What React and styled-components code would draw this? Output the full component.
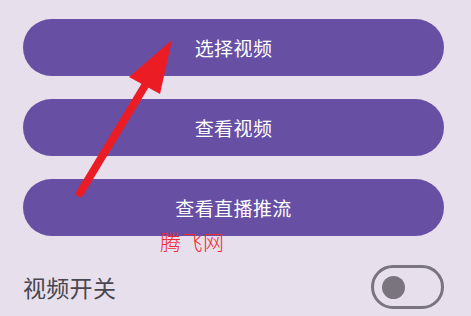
import React, { useState } from 'react'
import styled, { createGlobalStyle } from 'styled-components'

const Global = createGlobalStyle`
  html, body {
    margin: 0;
    padding: 0;
    background: #e7e0ec;
  }
  body {
    font-family: "Noto Sans CJK SC", "Noto Sans", sans-serif;
  }
`

const Page = styled.div`
  position: relative;
  width: 471px;
  height: 316px;
  overflow: hidden;
  background: #e7e0ec;
  box-sizing: border-box;
  padding: 19px 27px 0 23px;
  display: flex;
  flex-direction: column;
`

const Buttons = styled.div`
  display: flex;
  flex-direction: column;
  gap: 23px;
`

const Button = styled.button`
  height: 57px;
  width: 100%;
  border: none;
  border-radius: 29px;
  background: #6750a4;
  color: #ffffff;
  font-family: "Noto Sans CJK SC", "Noto Sans", sans-serif;
  font-size: 19px;
  letter-spacing: 0.4px;
  display: flex;
  align-items: center;
  justify-content: center;
  padding: 0;
  cursor: pointer;
`

const SwitchRow = styled.div`
  margin-top: 29px;
  height: 44px;
  display: flex;
  align-items: center;
  justify-content: space-between;
`

const Label = styled.span`
  font-size: 23px;
  color: #49454f;
  letter-spacing: 0.3px;
`

const Track = styled.div`
  width: 73px;
  height: 44px;
  box-sizing: border-box;
  border: 3px solid #79747e;
  border-radius: 22px;
  display: flex;
  align-items: center;
  padding-left: ${p => (p.$on ? '32px' : '8px')};
  cursor: pointer;
`

const Thumb = styled.div`
  width: 23px;
  height: 23px;
  border-radius: 50%;
  background: #79747e;
`

const Watermark = styled.div`
  position: absolute;
  left: 160px;
  top: 229px;
  font-size: 21px;
  font-weight: 300;
  color: #ee2a33;
  letter-spacing: 0.5px;
  line-height: 1.2;
`

const Arrow = styled.svg`
  position: absolute;
  left: 0;
  top: 0;
  pointer-events: none;
`

export default function App() {
  const [on, setOn] = useState(false)
  return (
    <Page>
      <Global />
      <Buttons>
        <Button>选择视频</Button>
        <Button>查看视频</Button>
        <Button>查看直播推流</Button>
      </Buttons>
      <SwitchRow>
        <Label>视频开关</Label>
        <Track $on={on} onClick={() => setOn(!on)}>
          <Thumb />
        </Track>
      </SwitchRow>
      <Watermark>腾飞网</Watermark>
      <Arrow width="471" height="316" viewBox="0 0 471 316">
        <line x1="80" y1="193" x2="146" y2="84" stroke="#ec1c24" strokeWidth="8" strokeLinecap="round" />
        <polygon points="172,40 129,77 160,94" fill="#ec1c24" />
      </Arrow>
    </Page>
  )
}
